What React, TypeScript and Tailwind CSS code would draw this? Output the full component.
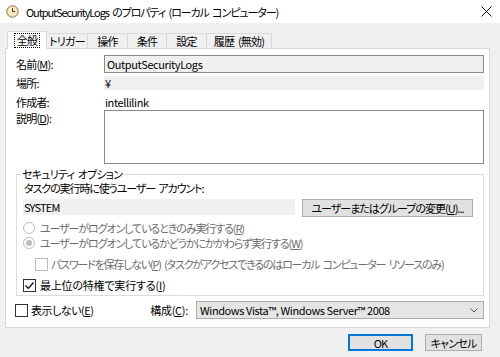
import React from "react";

const Radio = ({ checked }: { checked?: boolean }) => (
  <span className="w-[12px] h-[12px] rounded-full border border-[#bcbcbc] bg-white flex items-center justify-center shrink-0">
    {checked && <span className="w-[6px] h-[6px] rounded-full bg-[#bcbcbc]" />}
  </span>
);

const Check = ({ checked, disabled }: { checked?: boolean; disabled?: boolean }) => (
  <span
    className={
      "w-[13px] h-[13px] border bg-white flex items-center justify-center shrink-0 " +
      (disabled ? "border-[#bcbcbc]" : "border-[#333333]")
    }
  >
    {checked && (
      <svg width="11" height="11" viewBox="0 0 11 11">
        <path d="M1.5 5.5 L4.3 8.3 L9.5 2.5" fill="none" stroke="#000" strokeWidth="1.2" />
      </svg>
    )}
  </span>
);

export default function App() {
  const tabs = [
    { t: "トリガー", w: "w-[41px]" },
    { t: "操作", w: "w-[40px]" },
    { t: "条件", w: "w-[39px]" },
    { t: "設定", w: "w-[40px]" },
    { t: "履歴 (無効)", w: "w-[65px]" },
  ];
  return (
    <div className="w-[500px] h-[357px] bg-[#f0f0f0] flex flex-col overflow-hidden text-[11px] tracking-[-0.8px] [word-spacing:2px] leading-[14px] text-black font-['Noto_Sans_CJK_JP','Noto_Sans',sans-serif] [font-feature-settings:'palt']">
      {/* title bar */}
      <div className="h-[23px] bg-white flex items-center pl-[6px] shrink-0">
        <svg width="13" height="13" viewBox="0 0 13 13" className="shrink-0">
          <circle cx="6.5" cy="6.5" r="5.8" fill="#f3d27a" stroke="#7d7d7d" strokeWidth="0.9" />
          <circle cx="6.5" cy="6.5" r="4.4" fill="#fbeeca" />
          <path d="M6.5 3.2 V6.6 H9" fill="none" stroke="#333" strokeWidth="1" />
        </svg>
        <span className="ml-[7px] text-[11px] tracking-[-1.1px] whitespace-pre">OutputSecurityLogs のプロパティ (ローカル コンピューター)</span>
        <svg width="11" height="11" viewBox="0 0 11 11" className="ml-auto mr-[8px]">
          <path d="M0.5 0.5 L10.5 10.5 M10.5 0.5 L0.5 10.5" stroke="#111" strokeWidth="1" />
        </svg>
      </div>

      {/* tabs */}
      <div className="mt-[8px] h-[17px] pl-[7px] flex items-end shrink-0">
        <div className="relative z-10 h-[18px] -mb-px w-[40px] bg-white border border-b-0 border-[#d9d9d9] flex items-start justify-center pt-[1px]">
          <span className="border border-dotted border-black px-[2px] leading-[13px]">全般</span>
        </div>
        {tabs.map((x) => (
          <div
            key={x.t}
            className={"h-[15px] border-t border-r border-[#d9d9d9] bg-[#f0f0f0] flex items-center justify-center whitespace-pre leading-[14px] " + x.w}
          >
            {x.t}
          </div>
        ))}
      </div>

      {/* panel */}
      <div className="mx-[5px] w-[485px] h-[280px] border border-[#d9d9d9] bg-white pl-[10px] pr-[5px] pt-[6px] flex flex-col shrink-0">
        <div className="flex items-center h-[18px]">
          <span className="w-[88px] shrink-0">名前(<u>M</u>):</span>
          <div className="flex-1 h-[18px] border border-[#8a8a8a] bg-[#f0f0f0] pl-[2px] flex items-center tracking-[-0.4px]">OutputSecurityLogs</div>
        </div>
        <div className="flex items-center h-[14px] mt-[3px]">
          <span className="w-[88px] shrink-0">場所:</span>
          <div className="flex-1 h-[14px] bg-[#f0f0f0] pl-[1px] flex items-center">¥</div>
        </div>
        <div className="flex items-center h-[14px] mt-[5px]">
          <span className="w-[88px] shrink-0">作成者:</span>
          <div className="flex-1 pl-[1px] tracking-[-0.4px]">intellilink</div>
        </div>
        <div className="flex items-start mt-[1px]">
          <span className="w-[88px] shrink-0 pt-[1px]">説明(<u>D</u>):</span>
          <div className="flex-1 h-[54px] border border-[#8a8a8a] bg-white" />
        </div>

        <fieldset className="mt-[4px] border border-[#dcdcdc] px-[7px] pb-[3px]">
          <legend className="-ml-[3px] px-[1px] leading-[12px] whitespace-pre">セキュリティ オプション</legend>
          <div className="mt-[1px] h-[14px] whitespace-pre tracking-[-1.1px]">タスクの実行時に使うユーザー アカウント:</div>
          <div className="flex items-start mt-[4px] h-[18px]">
            <div className="-ml-[1px] w-[272px] h-[16px] bg-[#f0f0f0] pl-[1px] flex items-center">SYSTEM</div>
            <div className="ml-[7px] w-[171px] h-[18px] bg-[#e1e1e1] border border-[#adadad] flex items-center justify-center whitespace-nowrap tracking-[-1px]">
              ユーザーまたはグループの変更(<u>U</u>)...
            </div>
          </div>
          <div className="flex items-center h-[14px] mt-[4px] -ml-[1px] text-[#6d6d6d] whitespace-nowrap tracking-[-1.1px]">
            <Radio />
            <span className="ml-[5px]">ユーザーがログオンしているときのみ実行する(<u>R</u>)</span>
          </div>
          <div className="flex items-center h-[14px] mt-[1px] -ml-[1px] text-[#6d6d6d] whitespace-nowrap tracking-[-1.1px]">
            <Radio checked />
            <span className="ml-[5px]">ユーザーがログオンしているかどうかにかかわらず実行する(<u>W</u>)</span>
          </div>
          <div className="flex items-center h-[14px] mt-[7px] ml-[11px] text-[#6d6d6d] whitespace-pre tracking-[-1.2px]">
            <Check disabled />
            <span className="ml-[3px]">パスワードを保存しない(<u>P</u>) (タスクがアクセスできるのはローカル コンピューター リソースのみ)</span>
          </div>
          <div className="flex items-center h-[14px] mt-[7px] -ml-[1px] whitespace-nowrap tracking-[-0.2px]">
            <Check checked />
            <span className="ml-[4px]">最上位の特権で実行する(<u>I</u>)</span>
          </div>
        </fieldset>

        <div className="flex items-center mt-[5px] h-[18px]">
          <div className="-ml-[1px] flex items-center">
            <Check />
            <span className="ml-[3px] tracking-[-0.5px]">表示しない(<u>E</u>)</span>
          </div>
          <span className="ml-auto mr-[8px] tracking-[-0.3px]">構成(<u>C</u>):</span>
          <div className="w-[288px] h-[18px] bg-[#e5e5e5] border border-[#adadad] flex items-center pl-[3px] pr-[5px] tracking-[-0.4px] [word-spacing:0px]">
            <span>Windows Vista™, Windows Server™ 2008</span>
            <svg width="8" height="5" viewBox="0 0 8 5" className="ml-auto">
              <path d="M0.5 0.5 L4 4 L7.5 0.5" fill="none" stroke="#555" strokeWidth="1" />
            </svg>
          </div>
        </div>
      </div>

      {/* buttons */}
      <div className="flex justify-end gap-[12px] pr-[18px] mt-[6px]">
        <div className="w-[65px] h-[17px] bg-[#e1e1e1] border-2 border-[#0078d7] flex items-center justify-center">OK</div>
        <div className="w-[57px] h-[17px] bg-[#e1e1e1] border border-[#adadad] flex items-center justify-center">キャンセル</div>
      </div>
    </div>
  );
}
